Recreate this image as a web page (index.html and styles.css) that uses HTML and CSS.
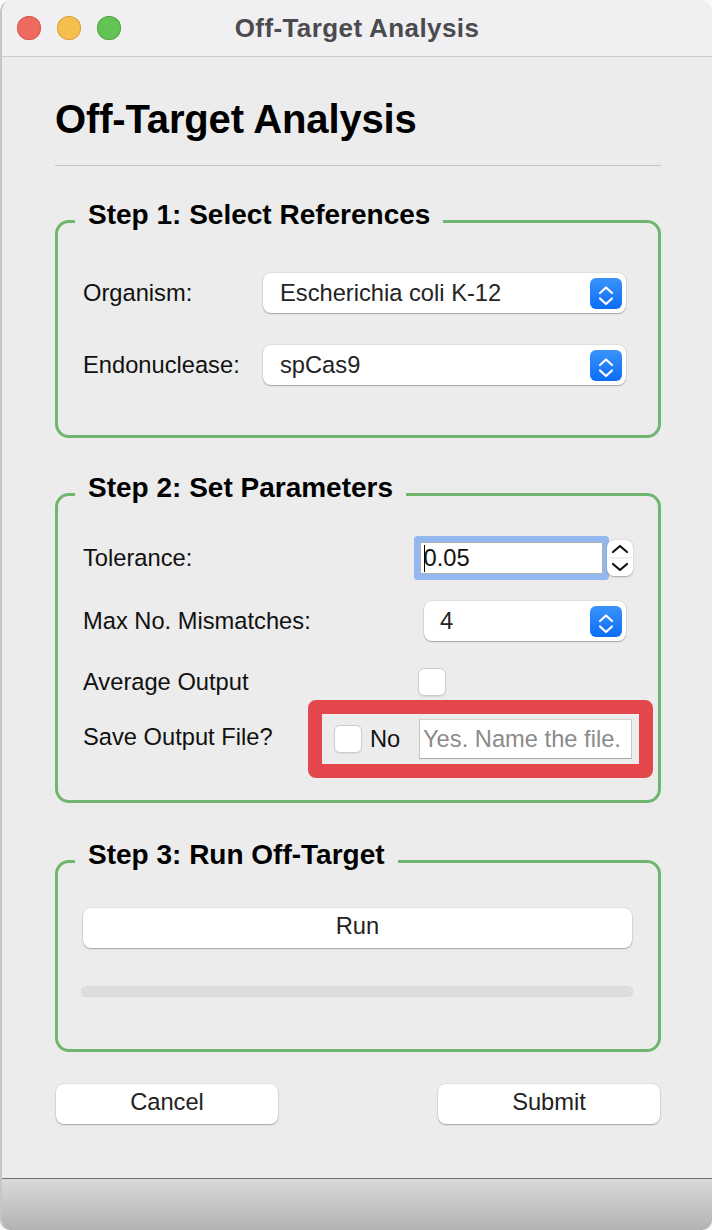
FILE: index.html
```html
<!DOCTYPE html>
<html lang="en">
<head>
<meta charset="utf-8">
<title>Off-Target Analysis</title>
<link rel="stylesheet" href="styles.css">
</head>
<body>
<div class="window">
  <header class="titlebar">
    <div class="lights">
      <span class="light light-red"></span>
      <span class="light light-yellow"></span>
      <span class="light light-green"></span>
    </div>
    <div class="wtitle">Off-Target Analysis</div>
    <div></div>
  </header>

  <main class="content">
    <h1 class="heading">Off-Target Analysis</h1>
    <div class="rule"></div>

    <fieldset class="group group-refs">
      <legend>Step 1: Select References</legend>
      <div class="row">
        <span class="label">Organism:</span>
        <div class="select select-org">
          <span class="select-text">Escherichia coli K-12</span>
          <span class="select-btn"><svg width="32" height="31" viewBox="0 0 32 31"><path d="M10 15 L16 9.5 L22 15 M10 20.5 L16 26 L22 20.5" fill="none" stroke="#fff" stroke-width="2.2" stroke-linecap="round" stroke-linejoin="round"/></svg></span>
        </div>
      </div>
      <div class="row">
        <span class="label">Endonuclease:</span>
        <div class="select select-org">
          <span class="select-text">spCas9</span>
          <span class="select-btn"><svg width="32" height="31" viewBox="0 0 32 31"><path d="M10 15 L16 9.5 L22 15 M10 20.5 L16 26 L22 20.5" fill="none" stroke="#fff" stroke-width="2.2" stroke-linecap="round" stroke-linejoin="round"/></svg></span>
        </div>
      </div>
    </fieldset>

    <fieldset class="group group-params">
      <legend>Step 2: Set Parameters</legend>
      <div class="row row-tol">
        <span class="label">Tolerance:</span>
        <div class="spin">
          <div class="field-tol"><span class="caret"></span>0.05</div>
          <div class="stepper"><svg width="26" height="36" viewBox="0 0 26 36"><path d="M6 12 L13 6 L20 12" fill="none" stroke="#111" stroke-width="2.2" stroke-linecap="round" stroke-linejoin="round"/><path d="M1 18 H25" stroke="#e2e2e2" stroke-width="1"/><path d="M6 24 L13 30 L20 24" fill="none" stroke="#111" stroke-width="2.2" stroke-linecap="round" stroke-linejoin="round"/></svg></div>
        </div>
      </div>
      <div class="row row-max">
        <span class="label">Max No. Mismatches:</span>
        <div class="select select-max">
          <span class="select-text">4</span>
          <span class="select-btn"><svg width="32" height="31" viewBox="0 0 32 31"><path d="M10 15 L16 9.5 L22 15 M10 20.5 L16 26 L22 20.5" fill="none" stroke="#fff" stroke-width="2.2" stroke-linecap="round" stroke-linejoin="round"/></svg></span>
        </div>
      </div>
      <div class="row row-avg">
        <span class="label">Average Output</span>
        <span class="check check-avg"></span>
      </div>
      <div class="row row-save">
        <span class="label label-save">Save Output File?</span>
        <div class="highlight">
          <span class="check"></span>
          <span class="no">No</span>
          <div class="filefield">Yes. Name the file.</div>
        </div>
      </div>
    </fieldset>

    <fieldset class="group group-run">
      <legend>Step 3: Run Off-Target</legend>
      <div class="btn btn-run">Run</div>
      <div class="progress"></div>
    </fieldset>

    <div class="actions">
      <div class="btn btn-action">Cancel</div>
      <div class="btn btn-action">Submit</div>
    </div>
  </main>

  <footer class="bottombar"></footer>
</div>
</body>
</html>
```

FILE: styles.css
```css
* { box-sizing: border-box; }

html, body {
  margin: 0;
  padding: 0;
  background: #fafafa;
}

body {
  font-family: "Liberation Sans", Arial, sans-serif;
  color: #111;
}

.window {
  width: 712px;
  height: 1230px;
  background: #ececec;
  border-left: 2px solid #c6c6c6;
  border-radius: 12px 12px 10px 10px;
  overflow: hidden;
  display: flex;
  flex-direction: column;
}

/* title bar */
.titlebar {
  height: 57px;
  flex: none;
  background: #f0f0f3;
  border-bottom: 1px solid #cdcdcd;
  display: grid;
  grid-template-columns: 1fr auto 1fr;
  align-items: center;
}

.lights {
  display: flex;
  gap: 16px;
  padding-left: 15px;
}

.light {
  width: 24px;
  height: 24px;
  border-radius: 50%;
}

.light-red { background: #ee6a5f; box-shadow: inset 0 0 0 1px #d85c51; }
.light-yellow { background: #f5be4f; box-shadow: inset 0 0 0 1px #dba33e; }
.light-green { background: #61c454; box-shadow: inset 0 0 0 1px #4fab41; }

.wtitle {
  font-weight: bold;
  font-size: 26px;
  letter-spacing: 0.4px;
  color: #4b4b4d;
}

/* content */
.content {
  flex: 1;
  padding: 0 51px 0 53px;
}

.heading {
  margin: 39px 0 0;
  font-size: 40px;
  line-height: 46px;
  font-weight: bold;
  letter-spacing: -0.15px;
  color: #000;
}

.rule {
  margin-top: 23px;
  height: 1px;
  background: #c4c4c4;
}

.group {
  margin: 0;
  min-width: 0;
  border: 3px solid #70b66f;
  border-radius: 14px;
  padding: 30px 26px 50px 25px;
}

.group legend {
  font-size: 28px;
  line-height: 32px;
  font-weight: bold;
  color: #000;
  padding: 0 13px 12px;
  margin-left: -8px;
}

.group-refs { margin-top: 33px; }
.group-params { margin-top: 34px; padding-top: 20px; padding-bottom: 22px; }
.group-run { margin-top: 36px; padding-top: 25px; padding-bottom: 52px; }

.row {
  display: flex;
  align-items: center;
}

.label {
  font-size: 23.7px;
  color: #111;
  flex: none;
}

.group-refs .label { width: 180px; }
.group-refs .row + .row { margin-top: 32px; }

.group-params .label { width: 337px; }
.group-params .label-save { width: 225px; padding-bottom: 3px; }

.row-tol { height: 44px; }
.row-max { margin-top: 21px; }
.row-avg { margin-top: 27px; }
.row-save { margin-top: 4px; }

/* popup selects */
.select {
  height: 40px;
  flex: none;
  display: flex;
  align-items: center;
  background: #fff;
  border-radius: 8px;
  box-shadow: 0 1px 1.5px rgba(0, 0, 0, 0.28), 0 0 0 0.5px rgba(0, 0, 0, 0.1);
  padding: 0 4px 0 17px;
}

.select-org { width: 363px; }
.select-max { width: 202px; margin-left: 4px; padding-left: 16px; }

.select-text {
  flex: 1;
  font-size: 23.7px;
  color: #242424;
}

.select-btn {
  width: 32px;
  height: 31px;
  border-radius: 6px;
  background: linear-gradient(#3b93fa, #0b6df5);
  display: flex;
}

/* spinner */
.spin {
  display: flex;
  align-items: center;
  gap: 4px;
}

.field-tol {
  width: 183px;
  height: 32px;
  background: #fff;
  border: 1px solid #b0b0b0;
  border-radius: 1px;
  box-shadow: 0 0 0 6px #93b8ee;
  display: flex;
  align-items: center;
  padding-left: 3px;
  font-size: 23.7px;
  color: #111;
}

.caret {
  width: 0;
  height: 27px;
  border-left: 1.5px solid #000;
  margin-right: -1.5px;
}

.stepper {
  width: 26px;
  height: 36px;
  background: #fff;
  border-radius: 7px;
  box-shadow: 0 0.5px 1.5px rgba(0, 0, 0, 0.3);
  display: flex;
}

/* checkboxes */
.check {
  width: 28px;
  height: 28px;
  flex: none;
  background: #fff;
  border: 1px solid #cecece;
  border-radius: 6px;
  box-shadow: 0 0.5px 1px rgba(0, 0, 0, 0.08);
}

.check-avg { margin-left: -2px; }

/* highlighted save area */
.highlight {
  flex: none;
  width: 345px;
  height: 78px;
  border: 14px solid #e4474b;
  border-radius: 8px;
  background: #ececec;
  display: flex;
  align-items: center;
  padding: 0 7px 0 12px;
}

.no {
  margin-left: 8px;
  font-size: 23.7px;
  color: #111;
}

.filefield {
  margin-left: auto;
  width: 213px;
  height: 40px;
  flex: none;
  background: #fff;
  border: 1px solid #c6c6c6;
  border-top-color: #d4d4d4;
  border-bottom-color: #a9a9a9;
  display: flex;
  align-items: center;
  padding-left: 3px;
  font-size: 23.7px;
  color: #8b8b8b;
  white-space: nowrap;
}

/* buttons */
.btn {
  height: 40px;
  background: #fff;
  border-radius: 8px;
  box-shadow: 0 1px 1.5px rgba(0, 0, 0, 0.28), 0 0 0 0.5px rgba(0, 0, 0, 0.1);
  display: flex;
  align-items: center;
  justify-content: center;
  padding-bottom: 3px;
  font-size: 23.7px;
  color: #222;
}

.progress {
  height: 11px;
  margin: 38px -1px 0 -2px;
  border-radius: 6px;
  background: #dedede;
  box-shadow: inset 0 0 0 0.5px rgba(0, 0, 0, 0.05);
}

.actions {
  display: flex;
  justify-content: space-between;
  margin: 32px 1px 0;
}

.btn-action { width: 222px; }

/* bottom bar */
.bottombar {
  flex: none;
  height: 52px;
  border-top: 1px solid #6e6e6e;
  background: linear-gradient(#dadada, #b2b2b2);
}
```
